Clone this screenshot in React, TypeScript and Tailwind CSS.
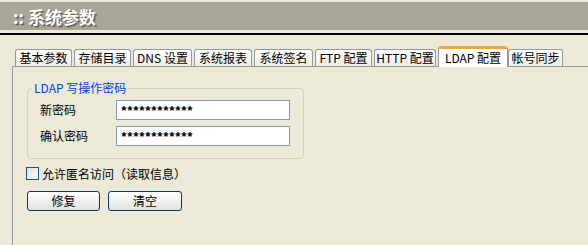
import React from "react";

const tabs = [
  { label: "基本参数", w: "w-[57px]", ml: "ml-0" },
  { label: "存储目录", w: "w-[57px]", ml: "ml-[2px]" },
  { label: "DNS 设置", w: "w-[59px]", ml: "ml-[2px]" },
  { label: "系统报表", w: "w-[58px]", ml: "ml-[2px]" },
  { label: "系统签名", w: "w-[59px]", ml: "ml-[2px]" },
  { label: "FTP 配置", w: "w-[57px]", ml: "ml-[2px]" },
  { label: "HTTP 配置", w: "w-[62px]", ml: "ml-[2px]" },
  { label: "LDAP 配置", w: "w-[70px]", ml: "ml-[2px]", active: true },
  { label: "帐号同步", w: "w-[55px]", ml: "ml-0" },
];

export default function App() {
  return (
    <div className="w-[588px] h-[245px] bg-[#ece9d8] overflow-hidden flex flex-col font-['Noto_Sans_CJK_SC','Liberation_Sans',sans-serif] text-[12px] text-black">
      {/* header */}
      <div className="mt-[2px] h-[28px] shrink-0 bg-[#a9a699] flex items-center pl-[13px]">
        <span className="text-white font-bold text-[17px] leading-none [text-shadow:1px_1px_0_#5a5a52,2px_2px_0_#8a887e]">
          :: 系统参数
        </span>
      </div>
      <div className="mt-[3px] h-[2px] shrink-0 bg-black" />

      {/* tabs */}
      <div className="mt-[11px] h-[20px] shrink-0 flex items-end pl-[15px]">
        {tabs.map((t) =>
          t.active ? (
            <div
              key={t.label}
              className={`${t.w} ${t.ml} relative z-10 -mb-px h-[21px] rounded-t-[3px] border-t-[3px] border-t-[#f2a83a] border-x border-x-[#919b9c] bg-white flex items-center justify-center leading-none`}
            >
              {t.label}
            </div>
          ) : (
            <div
              key={t.label}
              className={`${t.w} ${t.ml} h-[17px] rounded-t-[3px] border border-b-0 border-[#919b9c] bg-gradient-to-b from-white to-[#eeede5] flex items-center justify-center leading-none`}
            >
              {t.label}
            </div>
          )
        )}
      </div>

      {/* panel */}
      <div className="ml-[12px] flex-1 border-l border-t border-[#919b9c] flex flex-col">
        {/* fieldset */}
        <div className="relative ml-[14px] mt-[21px] w-[277px] h-[71px] rounded-[4px] border border-[#d0d0bf] flex flex-col pt-[11px] pl-[12px] gap-[6px]">
          <span className="absolute left-[4px] top-[-9px] px-[2px] bg-[#ece9d8] text-[#0046d5] leading-[16px]">
            LDAP 写操作密码
          </span>
          <div className="flex items-center h-[20px]">
            <span className="w-[76px] leading-none">新密码</span>
            <div className="w-[174px] h-[20px] border border-[#7f9db9] bg-white flex items-center pl-[3px] pt-[3px] font-['Liberation_Mono',monospace] font-bold text-[13px] tracking-[-1.8px] leading-none">
              ************
            </div>
          </div>
          <div className="flex items-center h-[20px]">
            <span className="w-[76px] leading-none">确认密码</span>
            <div className="w-[174px] h-[20px] border border-[#7f9db9] bg-white flex items-center pl-[3px] pt-[3px] font-['Liberation_Mono',monospace] font-bold text-[13px] tracking-[-1.8px] leading-none">
              ************
            </div>
          </div>
        </div>

        {/* checkbox */}
        <div className="ml-[13px] mt-[8px] flex items-center h-[13px]">
          <div className="w-[13px] h-[13px] border border-[#1c5180] bg-gradient-to-br from-[#dcdcd7] to-white" />
          <span className="ml-[3px] leading-none">允许匿名访问（读取信息）</span>
        </div>

        {/* buttons */}
        <div className="ml-[14px] mt-[11px] flex gap-[8px]">
          <button className="w-[73px] h-[20px] rounded-[3px] border border-[#003c74] bg-gradient-to-b from-white to-[#e3e3db] leading-none">
            修复
          </button>
          <button className="w-[74px] h-[20px] rounded-[3px] border border-[#003c74] bg-gradient-to-b from-white to-[#e3e3db] leading-none">
            清空
          </button>
        </div>
      </div>
    </div>
  );
}
